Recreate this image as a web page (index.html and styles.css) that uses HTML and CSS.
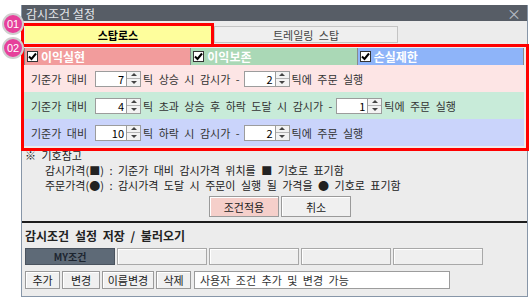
FILE: index.html
```html
<!DOCTYPE html>
<html>
    <head>
        <meta charset="utf-8">
        <link rel="stylesheet" href="styles.css">
    </head>
    <body>
        <div class="window">
            <div class="titlebar">
                <span class="title">감시조건 설정</span>
                <span class="close">×</span>
            </div>

            <div class="tabs">
                <div class="tab tab-on">스탑로스</div>
                <div class="tab">트레일링 스탑</div>
            </div>

            <div class="cond">
                <div class="cond-head">
                    <div class="head head-red"><span class="chk"><svg width="9" height="9" viewBox="0 0 9 9"><polyline points="1,4.5 3.5,7 8,1.5" fill="none" stroke="#000" stroke-width="2"/></svg></span>이익실현</div>
                    <div class="head head-green"><span class="chk"><svg width="9" height="9" viewBox="0 0 9 9"><polyline points="1,4.5 3.5,7 8,1.5" fill="none" stroke="#000" stroke-width="2"/></svg></span>이익보존</div>
                    <div class="head head-blue"><span class="chk"><svg width="9" height="9" viewBox="0 0 9 9"><polyline points="1,4.5 3.5,7 8,1.5" fill="none" stroke="#000" stroke-width="2"/></svg></span>손실제한</div>
                </div>
                <div class="row row-red">
                    <span>기준가 대비</span>
                    <span class="spin"><span class="spin-val">7</span><span class="spin-btns"><i class="up"></i><i class="dn"></i></span></span>
                    <span>틱 상승 시 감시가 -</span>
                    <span class="spin"><span class="spin-val">2</span><span class="spin-btns"><i class="up"></i><i class="dn"></i></span></span>
                    <span>틱에 주문 실행</span>
                </div>
                <div class="row row-green">
                    <span>기준가 대비</span>
                    <span class="spin"><span class="spin-val">4</span><span class="spin-btns"><i class="up"></i><i class="dn"></i></span></span>
                    <span>틱 초과 상승 후 하락 도달 시 감시가 -</span>
                    <span class="spin"><span class="spin-val">1</span><span class="spin-btns"><i class="up"></i><i class="dn"></i></span></span>
                    <span>틱에 주문 실행</span>
                </div>
                <div class="row row-blue">
                    <span>기준가 대비</span>
                    <span class="spin"><span class="spin-val">10</span><span class="spin-btns"><i class="up"></i><i class="dn"></i></span></span>
                    <span>틱 하락 시 감시가 -</span>
                    <span class="spin"><span class="spin-val">2</span><span class="spin-btns"><i class="up"></i><i class="dn"></i></span></span>
                    <span>틱에 주문 실행</span>
                </div>
            </div>

            <div class="notes">
                <div>※ 기호참고</div>
                <div class="note-line">감시가격(■) : 기준가 대비 감시가격 위치를 ■ 기호로 표기함</div>
                <div class="note-line">주문가격(●) : 감시가격 도달 시 주문이 실행 될 가격을 ● 기호로 표기함</div>
            </div>

            <div class="actions">
                <button class="btn btn-apply">조건적용</button>
                <button class="btn">취소</button>
            </div>

            <div class="separator"></div>

            <h3 class="save-title">감시조건 설정 저장 / 불러오기</h3>

            <div class="presets">
                <div class="preset preset-on">MY조건</div>
                <div class="preset"></div>
                <div class="preset"></div>
                <div class="preset"></div>
                <div class="preset"></div>
            </div>

            <div class="toolbar">
                <button class="btn btn-tool btn-add">추가</button>
                <button class="btn btn-tool btn-edit">변경</button>
                <button class="btn btn-tool btn-rename">이름변경</button>
                <button class="btn btn-tool btn-del">삭제</button>
                <div class="name-box">사용자 조건 추가 및 변경 가능</div>
            </div>

            <!-- annotation marks -->
            <div class="mark mark-1"></div>
            <div class="mark mark-2"></div>
            <div class="badge badge-1">01</div>
            <div class="badge badge-2">02</div>
        </div>
    </body>
</html>
```

FILE: styles.css
```css
body {
    margin: 0px;
    padding: 5px 0px 0px 21px;
    background: white;
    font-family: "Noto Sans CJK KR", "Noto Sans", sans-serif;
    font-size: 11px;
    color: #222;
}

.window {
    position: relative;
    width: 505px;
    background: #ececec;
    border: 1px solid #8796a8;
    border-top: none;
    padding-bottom: 7px;
}

.titlebar {
    height: 16px;
    background: #575d66;
    color: #e4e6ea;
    display: flex;
    align-items: center;
    justify-content: space-between;
    padding: 0px 6px 0px 4px;
    font-size: 12px;
}

.close {
    color: #b9bec6;
    font-size: 14px;
}

/* tabs */
.tabs {
    display: flex;
    gap: 3px;
    margin: 5px 0px 0px 3px;
}

.tab {
    width: 184px;
    height: 17px;
    box-sizing: border-box;
    border: 1px solid #c4c4c4;
    background: #efefef;
    display: flex;
    align-items: center;
    justify-content: center;
    color: #444;
    word-spacing: 3px;
}

.tab-on {
    width: 186px;
    background: #fefe9c;
    border-color: #fefe9c;
    color: #000;
    font-weight: bold;
}

/* condition block */
.cond {
    margin: 5px 3px 0px 2px;
}

.cond-head {
    display: flex;
    height: 17px;
}

.head {
    flex: 1;
    display: flex;
    align-items: center;
    gap: 3px;
    padding-left: 2px;
    color: white;
    font-weight: bold;
    font-size: 12px;
    border: 1px solid #8a8a8a;
    border-top: none;
    border-bottom: none;
}

.head + .head {
    border-left: none;
}

.head-red { background: #f29c9c; }
.head-green { background: #aad8b6; }
.head-blue { background: #8eb4f9; }

.chk {
    width: 11px;
    height: 11px;
    box-sizing: border-box;
    background: white;
    border: 1px solid #333;
    display: flex;
    align-items: center;
    justify-content: center;
}

.row {
    height: 27px;
    display: flex;
    align-items: center;
    padding-left: 7px;
    word-spacing: 3px;
    color: #333;
}

.row-red { background: #fde5e5; }
.row-green { background: #c8ebd9; }
.row-blue { background: #cad4fb; }

.spin {
    display: flex;
    margin: 0px 2px 0px 8px;
    height: 16px;
}

.row span + .spin + span + .spin {
    margin-left: 4px;
}

.spin-val {
    width: 32px;
    box-sizing: border-box;
    background: white;
    border: 1px solid #9c9c9c;
    text-align: right;
    padding-right: 2px;
    line-height: 14px;
    color: #000;
}

.spin-btns {
    width: 14px;
    display: flex;
    flex-direction: column;
    border: 1px solid #9c9c9c;
    border-left: none;
    box-sizing: border-box;
    background: #f3f3f3;
}

.spin-btns i {
    flex: 1;
    display: flex;
    align-items: center;
    justify-content: center;
}

.spin-btns i + i {
    border-top: 1px solid #b4b4b4;
}

.spin-btns .up::after {
    content: "";
    border-left: 3px solid transparent;
    border-right: 3px solid transparent;
    border-bottom: 3px solid #444;
}

.spin-btns .dn::after {
    content: "";
    border-left: 3px solid transparent;
    border-right: 3px solid transparent;
    border-top: 3px solid #444;
}

/* notes */
.notes {
    margin: 2px 0px 0px 3px;
    line-height: 15px;
    color: #222;
    word-spacing: 3px;
}

.note-line {
    padding-left: 20px;
}

/* buttons */
.actions {
    display: flex;
    gap: 2px;
    margin-top: 3px;
    padding-left: 187px;
}

.btn {
    font-family: inherit;
    font-size: 11px;
    color: #222;
    background: #f0f0f0;
    border: 1px solid #9a9a9a;
    box-shadow: inset 1px 1px 0px white;
    padding: 0px;
    margin: 0px;
}

.actions .btn {
    width: 70px;
    height: 21px;
}

.btn-apply {
    background: #f5cfca;
}

.separator {
    margin-top: 4px;
    height: 2px;
    background: #1c1c1c;
}

.save-title {
    margin: 5px 0px 0px 3px;
    height: 16px;
    line-height: 16px;
    font-size: 12px;
    font-weight: bold;
    color: #222;
    word-spacing: 3px;
}

.presets {
    display: flex;
    gap: 2px;
    margin: 4px 0px 0px 3px;
}

.preset {
    width: 90px;
    height: 17px;
    box-sizing: border-box;
    border: 1px solid #a8a8a8;
    box-shadow: inset 1px 1px 0px white;
    background: #efefef;
}

.preset-on {
    background: #5e6a77;
    border-color: #4a535e;
    box-shadow: none;
    color: #1d2530;
    font-size: 10px;
    font-weight: bold;
    text-align: center;
    line-height: 15px;
}

.toolbar {
    display: flex;
    gap: 2px;
    margin: 6px 0px 0px 3px;
    height: 18px;
}

.btn-tool { height: 18px; }
.btn-add { width: 35px; }
.btn-edit { width: 38px; }
.btn-rename { width: 52px; }
.btn-del { width: 35px; }

.name-box {
    margin-left: 1px;
    width: 256px;
    box-sizing: border-box;
    background: white;
    border: 1px solid #9c9c9c;
    padding-left: 5px;
    line-height: 16px;
    color: #333;
    word-spacing: 3px;
}

/* red annotation frames and numbered badges */
.mark {
    position: absolute;
    box-sizing: border-box;
    border: 3px solid #ff0000;
}

.mark-1 {
    left: -1px;
    top: 18px;
    width: 193px;
    height: 24px;
}

.mark-2 {
    left: -1px;
    top: 39px;
    width: 508px;
    height: 107px;
}

.badge {
    position: absolute;
    left: -20px;
    width: 18px;
    height: 18px;
    border-radius: 50%;
    border: 2px solid #cfcfcf;
    background: #e6409b;
    color: white;
    font-family: "Liberation Sans", sans-serif;
    font-size: 11px;
    line-height: 18px;
    text-align: center;
}

.badge-1 { top: 8px; }
.badge-2 { top: 32px; }
```
